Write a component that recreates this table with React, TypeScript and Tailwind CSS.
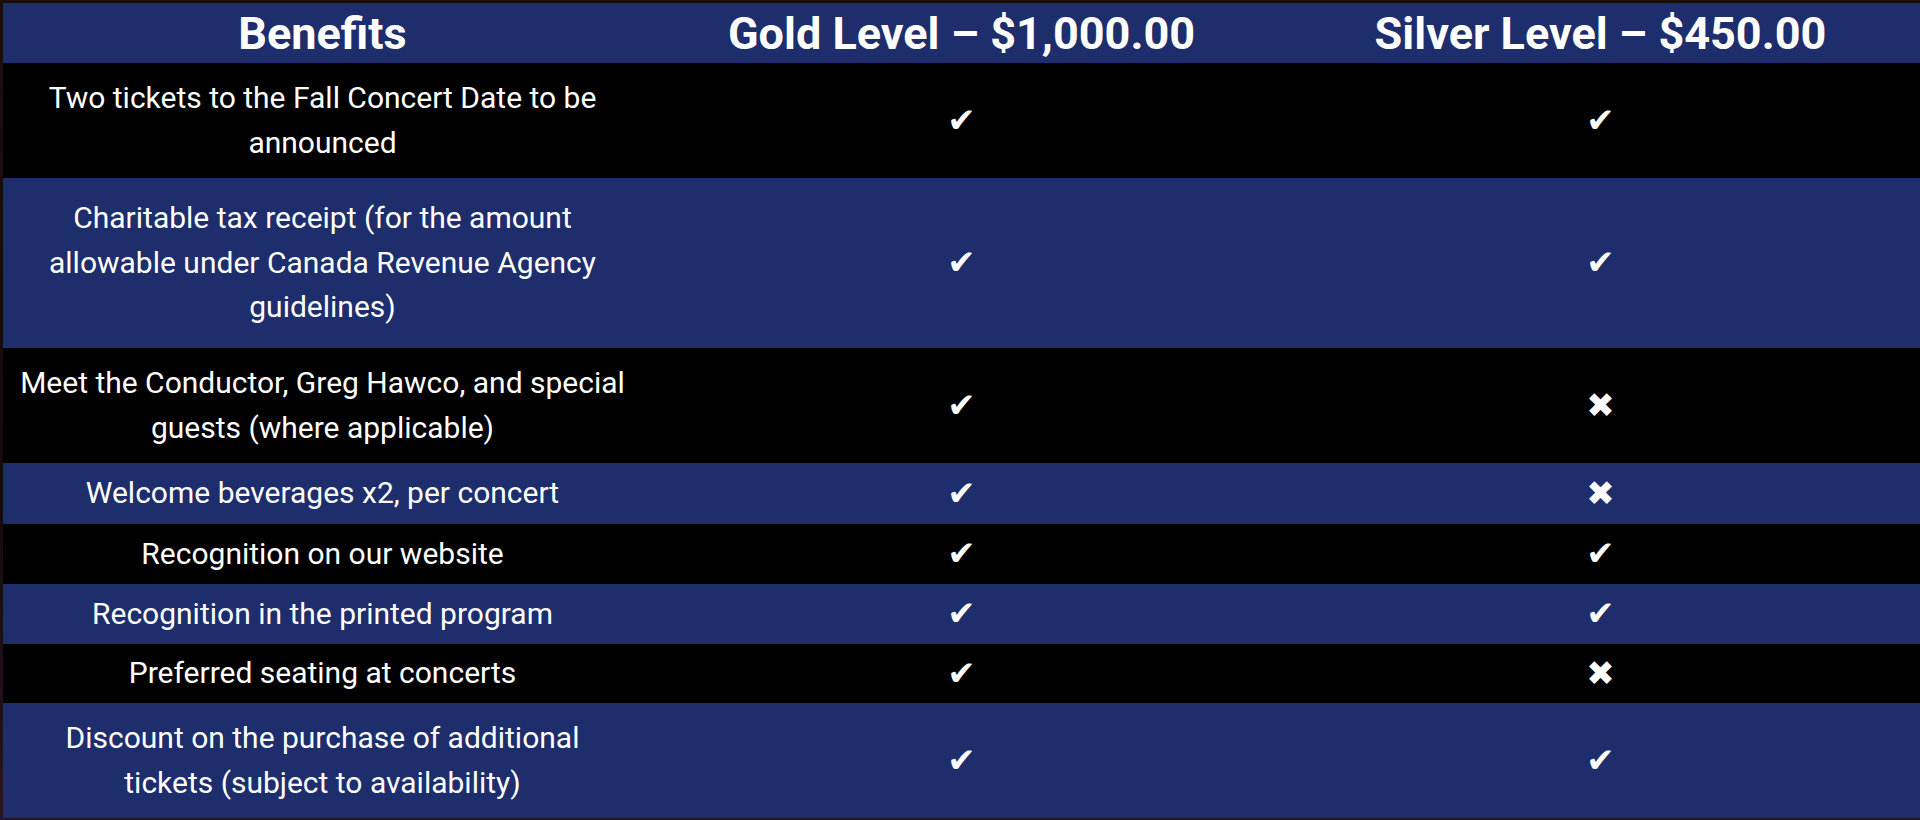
import React from 'react';

type Row = {
  lines: string[];
  gold: boolean;
  silver: boolean;
  h: string;
  dark: boolean;
};

const rows: Row[] = [
  { lines: ['Two tickets to the Fall Concert Date to be', 'announced'], gold: true, silver: true, h: 'h-[115px]', dark: true },
  {
    lines: ['Charitable tax receipt (for the amount', 'allowable under Canada Revenue Agency', 'guidelines)'],
    gold: true,
    silver: true,
    h: 'h-[170px]',
    dark: false,
  },
  { lines: ['Meet the Conductor, Greg Hawco, and special', 'guests (where applicable)'], gold: true, silver: false, h: 'h-[115px]', dark: true },
  { lines: ['Welcome beverages x2, per concert'], gold: true, silver: false, h: 'h-[61px]', dark: false },
  { lines: ['Recognition on our website'], gold: true, silver: true, h: 'h-[60px]', dark: true },
  { lines: ['Recognition in the printed program'], gold: true, silver: true, h: 'h-[60px]', dark: false },
  { lines: ['Preferred seating at concerts'], gold: true, silver: false, h: 'h-[59px]', dark: true },
  { lines: ['Discount on the purchase of additional', 'tickets (subject to availability)'], gold: true, silver: true, h: 'h-[115px]', dark: false },
];

const Mark: React.FC<{ yes: boolean }> = ({ yes }) => (
  <span className="font-['DejaVu_Sans',sans-serif] text-[34px] leading-none text-white">{yes ? '✔' : '✖'}</span>
);

export default function App() {
  return (
    <div className="h-[820px] w-full overflow-hidden bg-[linear-gradient(180deg,#1d0d0e_0%,#140a10_60%,#2a1322_100%)] pl-[3px] pt-[3px]">
      <table className="w-[1917px] border-collapse font-['Roboto',sans-serif] text-white">
        <thead>
          <tr className="h-[60px] bg-[#1e2d6b]">
            <th className="w-1/3 text-center text-[45px] font-bold leading-none">Benefits</th>
            <th className="w-1/3 text-center text-[45px] font-bold leading-none">Gold Level – $1,000.00</th>
            <th className="w-1/3 text-center text-[45px] font-bold leading-none">Silver Level – $450.00</th>
          </tr>
        </thead>
        <tbody>
          {rows.map((r, i) => (
            <tr key={i} className={`${r.h} ${r.dark ? 'bg-black' : 'bg-[#1e2d6b]'}`}>
              <td className="px-2 text-center align-middle text-[30px] leading-[44.5px]">
                {r.lines.map((l, j) => (
                  <div key={j}>{l}</div>
                ))}
              </td>
              <td className="text-center align-middle">
                <Mark yes={r.gold} />
              </td>
              <td className="text-center align-middle">
                <Mark yes={r.silver} />
              </td>
            </tr>
          ))}
        </tbody>
      </table>
    </div>
  );
}
